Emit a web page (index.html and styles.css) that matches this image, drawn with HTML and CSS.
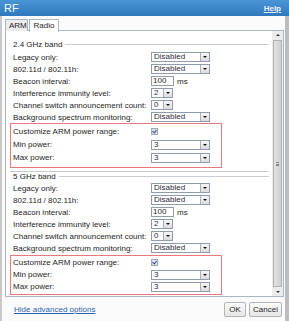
FILE: index.html
```html
<!DOCTYPE html>
<html>
<head>
<meta charset="utf-8">
<link rel="stylesheet" href="styles.css">
</head>
<body>
<div class="win">
  <div class="titlebar">
    <span class="title">RF</span>
    <a class="help">Help</a>
  </div>
  <div class="body">
    <div class="tabs">
      <span class="tab">ARM</span>
      <span class="tab active">Radio</span>
    </div>
    <div class="panel">
      <div class="content">
        <div class="sec"><span>2.4 GHz band</span><i class="rule"></i></div>
        <div class="row"><span class="lbl">Legacy only:</span><span class="sel w58"><span class="v">Disabled</span><span class="btn"></span></span></div>
        <div class="row"><span class="lbl">802.11d / 802.11h:</span><span class="sel w58"><span class="v">Disabled</span><span class="btn"></span></span></div>
        <div class="row"><span class="lbl">Beacon interval:</span><span class="inp">100</span><span class="unit">ms</span></div>
        <div class="row"><span class="lbl">Interference immunity level:</span><span class="sel w22"><span class="v">2</span><span class="btn"></span></span></div>
        <div class="row"><span class="lbl">Channel switch announcement count:</span><span class="sel w22"><span class="v">0</span><span class="btn"></span></span></div>
        <div class="row"><span class="lbl">Background spectrum monitoring:</span><span class="sel w58"><span class="v">Disabled</span><span class="btn"></span></span></div>
        <div class="box box1">
          <div class="row r13"><span class="lbl">Customize ARM power range:</span><span class="chk"></span></div>
          <div class="row r13"><span class="lbl">Min power:</span><span class="sel w58"><span class="v">3</span><span class="btn"></span></span></div>
          <div class="row r13"><span class="lbl">Max power:</span><span class="sel w58"><span class="v">3</span><span class="btn"></span></span></div>
        </div>
        <div class="sec sec2"><span>5 GHz band</span><i class="rule"></i></div>
        <div class="row"><span class="lbl">Legacy only:</span><span class="sel w58"><span class="v">Disabled</span><span class="btn"></span></span></div>
        <div class="row"><span class="lbl">802.11d / 802.11h:</span><span class="sel w58"><span class="v">Disabled</span><span class="btn"></span></span></div>
        <div class="row"><span class="lbl">Beacon interval:</span><span class="inp">100</span><span class="unit">ms</span></div>
        <div class="row"><span class="lbl">Interference immunity level:</span><span class="sel w22"><span class="v">2</span><span class="btn"></span></span></div>
        <div class="row"><span class="lbl">Channel switch announcement count:</span><span class="sel w22"><span class="v">0</span><span class="btn"></span></span></div>
        <div class="row"><span class="lbl">Background spectrum monitoring:</span><span class="sel w58"><span class="v">Disabled</span><span class="btn"></span></span></div>
        <div class="box box2">
          <div class="row r12"><span class="lbl">Customize ARM power range:</span><span class="chk"></span></div>
          <div class="row r12"><span class="lbl">Min power:</span><span class="sel w58"><span class="v">3</span><span class="btn"></span></span></div>
          <div class="row r12"><span class="lbl">Max power:</span><span class="sel w58"><span class="v">3</span><span class="btn"></span></span></div>
        </div>
      </div>
      <div class="sbar">
        <span class="arrow up"></span>
        <span class="thumb"><i class="grip"></i></span>
        <span class="arrow down"></span>
      </div>
    </div>
    <div class="footer">
      <a class="link">Hide advanced options</a>
      <div class="btns">
        <span class="button ok">OK</span>
        <span class="button">Cancel</span>
      </div>
    </div>
  </div>
</div>
</body>
</html>
```

FILE: styles.css
```css
html, body {
  margin: 0;
  padding: 0;
  background: #ffffff;
}
body {
  width: 289px;
  height: 321px;
  overflow: hidden;
  font-family: "Liberation Sans", Arial, sans-serif;
  font-size: 8px;
  color: #1e1e1e;
}
.win {
  width: 289px;
  height: 321px;
  display: flex;
  flex-direction: column;
}
.titlebar {
  height: 16px;
  flex: none;
  background: linear-gradient(#4a95d6, #2f78bd);
  display: flex;
  align-items: center;
  justify-content: space-between;
  padding: 0 8px 0 4px;
  color: #fff;
}
.title {
  font-size: 11px;
  line-height: 16px;
}
.help {
  font-size: 8px;
  font-weight: bold;
  text-decoration: underline;
  color: #f0f4ff;
}
.body {
  flex: 1;
  display: flex;
  flex-direction: column;
  background: #fbfbfb;
  border-left: 2px solid #c9c9c9;
  border-right: 4px solid #bdbdbd;
}
.tabs {
  display: flex;
  margin: 3px 0 -1px 3px;
  height: 12px;
  position: relative;
  z-index: 1;
}
.tab {
  height: 11px;
  line-height: 11px;
  padding: 0 3px;
  border: 1px solid #a9b7c9;
  border-bottom: none;
  background: #ececec;
  margin-right: 1px;
  width: 15px;
  text-align: center;
}
.tab.active {
  background: #fff;
  height: 12px;
  width: 22px;
}
.panel {
  height: 265px;
  margin: 0 1px 0 3px;
  border: 1px solid #a9b7c9;
  background: #fff;
  display: flex;
}
.content {
  flex: 1;
  padding: 7px 3px 0 4px;
}
.sec {
  height: 12px;
  display: flex;
  align-items: center;
  padding-left: 3px;
  margin-bottom: 1px;
  color: #222;
}
.sec .rule {
  flex: 1;
  height: 0;
  border-top: 1px solid #c8cdd4;
  margin: 0 0 0 3px;
}
.sec2 {
  margin-top: 3px;
  height: 9px;
  border-top: 1px solid #c8cdd4;
}
.row {
  height: 12px;
  display: flex;
  align-items: center;
  padding-left: 3px;
}
.r13 { height: 13px; }
.r12 { height: 12.4px; }
.lbl {
  width: 138px;
  flex: none;
  white-space: nowrap;
}
.box {
  width: 210px;
  border: 1px solid #e8787c;
  margin-left: 0;
}
.box .row { padding-left: 2px; }
.box1 { padding: 1px 0 3px; }
.box2 { padding: 0 0 1px; margin-top: 1px; }
.sel {
  height: 10px;
  box-sizing: border-box;
  border: 1px solid #8f9cae;
  background: #fff;
  display: flex;
  align-items: stretch;
}
.w58 { width: 59px; }
.w22 { width: 22px; }
.sel .v {
  flex: 1;
  padding-left: 2px;
  line-height: 8px;
  color: #2b2b3b;
}
.sel .btn {
  width: 8px;
  border-left: 1px solid #a8b0bc;
  background: linear-gradient(#f6f6f6, #dcdcdc);
  position: relative;
}
.sel .btn::after {
  content: "";
  position: absolute;
  left: 2px;
  top: 3px;
  border-left: 2px solid transparent;
  border-right: 2px solid transparent;
  border-top: 2px solid #111;
}
.inp {
  width: 23px;
  height: 10px;
  box-sizing: border-box;
  border: 1px solid #8f9cae;
  padding-left: 1px;
  line-height: 8px;
}
.unit {
  margin-left: 3px;
}
.chk {
  width: 7px;
  height: 7px;
  box-sizing: border-box;
  border: 1px solid #a0a8b4;
  background: #dfe3e8;
  position: relative;
}
.chk::after {
  content: "";
  position: absolute;
  left: 1px;
  top: 0;
  width: 2px;
  height: 3px;
  border-right: 1px solid #2a4fa8;
  border-bottom: 1px solid #2a4fa8;
  transform: rotate(40deg);
}
.sbar {
  width: 11px;
  flex: none;
  background: #ececec;
  display: flex;
  flex-direction: column;
  align-items: center;
  padding: 1px 0;
  box-sizing: border-box;
}
.arrow {
  height: 7px;
  width: 9px;
  position: relative;
  flex: none;
}
.arrow::after {
  content: "";
  position: absolute;
  left: 3px;
  border-left: 2px solid transparent;
  border-right: 2px solid transparent;
}
.arrow.up::after {
  top: 2px;
  border-bottom: 2px solid #333;
}
.arrow.down::after {
  top: 3px;
  border-top: 2px solid #333;
}
.thumb {
  flex: 1;
  width: 9px;
  box-sizing: border-box;
  border: 1px solid #b2b2b2;
  background: linear-gradient(90deg, #e2e2e2, #d0d0d0);
  margin: 1px 0;
  display: flex;
  align-items: center;
  justify-content: center;
}
.grip {
  width: 3px;
  height: 4px;
  border-top: 1px solid #8a8a8a;
  border-bottom: 1px solid #8a8a8a;
  box-sizing: border-box;
  background: linear-gradient(transparent 1px, #8a8a8a 1px, #8a8a8a 2px, transparent 2px);
}
.footer {
  flex: 1;
  display: flex;
  align-items: center;
  justify-content: space-between;
  padding: 0 3px 0 12px;
}
.link {
  color: #2c63ad;
  text-decoration: underline;
}
.btns {
  display: flex;
  gap: 3px;
}
.button {
  height: 13px;
  line-height: 13px;
  border: 1px solid #b4b4b4;
  border-radius: 2px;
  background: linear-gradient(#fbfbfb, #e6e6e6);
  padding: 0 3px;
  text-align: center;
}
.button.ok {
  width: 14px;
}
```
